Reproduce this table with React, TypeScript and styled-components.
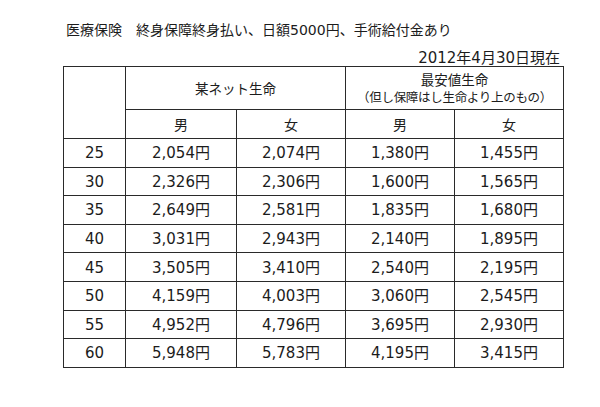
import styled, { createGlobalStyle } from 'styled-components';

const GlobalStyle = createGlobalStyle`
  html, body {
    margin: 0;
    padding: 0;
    background: #fff;
  }
  body {
    font-family: "DejaVu Sans", "Noto Sans CJK JP", sans-serif;
    color: #1c1c1c;
  }
`;

const FONT = `"DejaVu Sans", "Noto Sans CJK JP", sans-serif`;

const ROWS: [number, string, string, string, string][] = [
  [25, '2,054', '2,074', '1,380', '1,455'],
  [30, '2,326', '2,306', '1,600', '1,565'],
  [35, '2,649', '2,581', '1,835', '1,680'],
  [40, '3,031', '2,943', '2,140', '1,895'],
  [45, '3,505', '3,410', '2,540', '2,195'],
  [50, '4,159', '4,003', '3,060', '2,545'],
  [55, '4,952', '4,796', '3,695', '2,930'],
  [60, '5,948', '5,783', '4,195', '3,415'],
];

const Page = styled.div`
  width: 600px;
  height: 407px;
  padding-top: 20px;
  box-sizing: border-box;
`;

const Title = styled.div`
  margin-left: 66px;
  font-family: ${FONT};
  font-size: 14px;
  line-height: 20px;
  white-space: nowrap;
`;

const Sheet = styled.div`
  width: 500px;
  margin-left: 63px;
`;

const AsOf = styled.div`
  margin-top: 10px;
  padding-right: 3px;
  text-align: right;
  font-family: ${FONT};
  font-size: 15px;
  line-height: 16px;
`;

const Grid = styled.table`
  border-collapse: collapse;
  table-layout: fixed;
  width: 500px;
  border: 1px solid #2a2a2a;
`;

const Cell = styled.td<{ $h?: number }>`
  border: 1px solid #2a2a2a;
  padding: 2px 0 0;
  height: ${p => p.$h ?? 28.6}px;
  text-align: center;
  vertical-align: middle;
  font-family: ${FONT};
  font-size: 15px;
  font-weight: 400;
  line-height: 17px;
  box-sizing: border-box;
`;

const HeadCell = styled(Cell)`
  font-size: 14px;
`;

const GroupName = styled.div<{ $small?: boolean }>`
  font-size: ${p => (p.$small ? 12.5 : 13.5)}px;
  letter-spacing: ${p => (p.$small ? -0.3 : 0)}px;
  line-height: 17px;
  white-space: nowrap;
`;

const widths = [62, 111, 109, 109, 109];

export default function App() {
  return (
    <Page>
      <GlobalStyle />
      <Title>医療保険　終身保障終身払い、日額5000円、手術給付金あり</Title>
      <Sheet>
        <AsOf>2012年4月30日現在</AsOf>
        <Grid>
          <colgroup>
            {widths.map((w, i) => (
              <col key={i} style={{ width: w }} />
            ))}
          </colgroup>
          <thead>
            <tr>
              <HeadCell as="th" rowSpan={2} $h={43} />
              <HeadCell as="th" colSpan={2} $h={43}>
                <GroupName>某ネット生命</GroupName>
              </HeadCell>
              <HeadCell as="th" colSpan={2} $h={43}>
                <GroupName>最安値生命</GroupName>
                <GroupName $small>（但し保障はし生命より上のもの）</GroupName>
              </HeadCell>
            </tr>
            <tr>
              <HeadCell as="th" $h={29}>男</HeadCell>
              <HeadCell as="th" $h={29}>女</HeadCell>
              <HeadCell as="th" $h={29}>男</HeadCell>
              <HeadCell as="th" $h={29}>女</HeadCell>
            </tr>
          </thead>
          <tbody>
            {ROWS.map(([age, ...prices]) => (
              <tr key={age}>
                <Cell>{age}</Cell>
                {prices.map((p, i) => (
                  <Cell key={i}>{p}円</Cell>
                ))}
              </tr>
            ))}
          </tbody>
        </Grid>
      </Sheet>
    </Page>
  );
}
